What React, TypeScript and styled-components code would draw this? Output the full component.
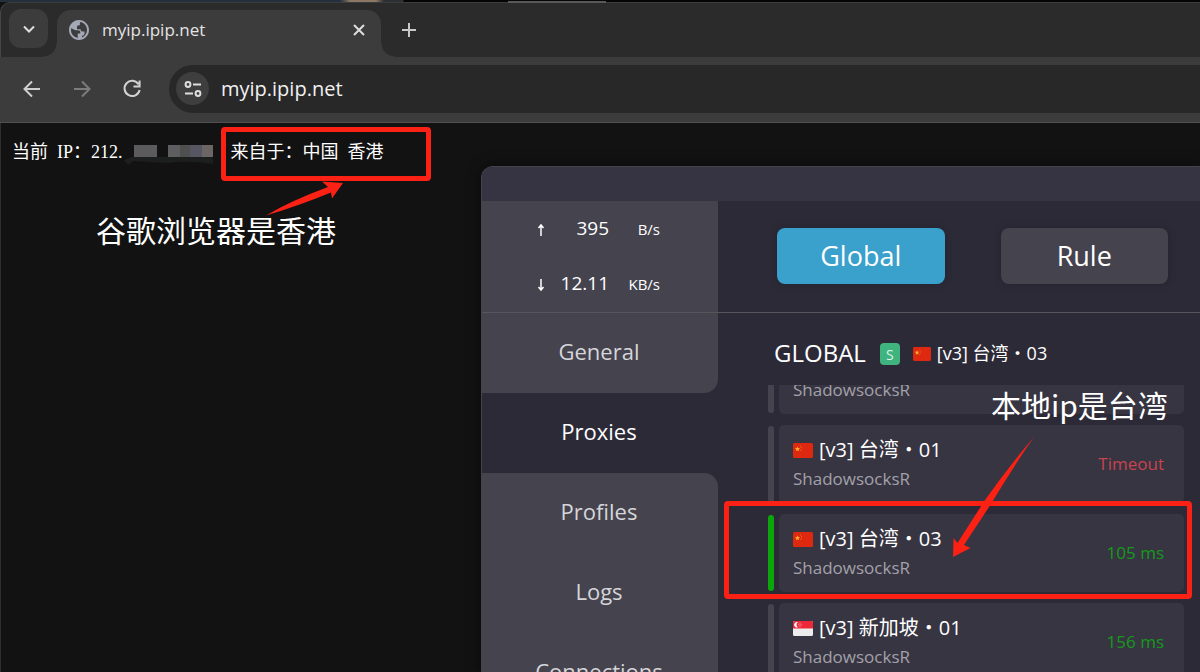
import React from "react";
import styled, { createGlobalStyle } from "styled-components";

const uiFont = `"Open Sans", "Noto Sans CJK SC", sans-serif`;

const GlobalStyle = createGlobalStyle`
  * { box-sizing: border-box; }
  html, body, #root { height: 100%; }
  body { margin: 0; background: #121212; overflow: hidden; font-family: ${uiFont}; }
  button, input { font-family: inherit; }
  h2, p { margin: 0; font-weight: 400; }
`;

const Screen = styled.div`
  position: relative;
  display: flex;
  flex-direction: column;
  height: 100%;
  overflow: hidden;
  background: #121212;
`;

/* ---------- browser ---------- */

const TopEdge = styled.div`
  display: flex;
  height: 2px;
  background: linear-gradient(90deg, #24313c 0 340px, #8b7764 350px 376px, #2c3034 384px 403px, #050505 404px);
`;

const EdgeHandle = styled.div`
  position: absolute;
  left: 471px;
  top: 1px;
  left: 508px;
  width: 98px;
  height: 2px;
  background: #58585b;
`;

const TabStrip = styled.div`
  display: flex;
  align-items: flex-end;
  height: 55px;
  padding-left: 8px;
  background: #2b2b2b;
  border-top: 1px solid #3a3c3e;
  border-left: 1px solid #44474a;
  border-top-left-radius: 10px;
`;

const IconButton = styled.button<{ $size: number; $bg?: string; $radius?: number }>`
  display: flex;
  align-items: center;
  justify-content: center;
  flex: none;
  width: ${(p) => p.$size}px;
  height: ${(p) => p.$size}px;
  padding: 0;
  border: 0;
  border-radius: ${(p) => p.$radius ?? 12}px;
  background: ${(p) => p.$bg ?? "transparent"};
  color: #e3e3e3;
`;

const TabSearch = styled.div`
  align-self: flex-start;
  padding-top: 6px;
`;

const Tab = styled.div`
  position: relative;
  display: flex;
  align-items: center;
  width: 324px;
  height: 47px;
  margin-left: 9px;
  padding: 0 10px 8px 12px;
  border-radius: 14px 14px 0 0;
  background: #3c3c3c;
  color: #e3e3e3;
  font-size: 17px;

  &::before, &::after {
    content: "";
    position: absolute;
    bottom: 0;
    width: 14px;
    height: 14px;
  }
  &::before {
    right: 100%;
    background: radial-gradient(circle at 0 0, transparent 13px, #3c3c3c 14px);
  }
  &::after {
    left: 100%;
    background: radial-gradient(circle at 100% 0, transparent 13px, #3c3c3c 14px);
  }
`;

const TabTitle = styled.span`
  flex: 1;
  margin-left: 13px;
`;

const NewTab = styled.div`
  margin: 0 0 13px 14px;
`;

const Toolbar = styled.div`
  display: flex;
  align-items: center;
  height: 66px;
  padding: 0 0 2px 16px;
  background: #3c3c3c;
  border-bottom: 1px solid #505052;
`;

const NavButtons = styled.div`
  display: flex;
  gap: 18px;
`;

const Omnibox = styled.label`
  display: flex;
  flex: 1;
  align-items: center;
  height: 48px;
  margin-left: 21px;
  padding-left: 7px;
  border-radius: 24px 0 0 24px;
  background: #282828;
`;

const Address = styled.input`
  flex: 1;
  min-width: 0;
  margin-left: 12px;
  padding: 0;
  border: 0;
  outline: 0;
  background: transparent;
  color: #f1f1f1;
  font-size: 20px;
  line-height: 28px;
`;

const Page = styled.main`
  flex: 1;
  border-left: 1px solid #2e2e2e;
  padding: 15px 11px;
`;

const IpLine = styled.p`
  display: flex;
  align-items: center;
  gap: 9px;
  color: #fff;
  font: 18px/28px "Liberation Serif", "Noto Sans CJK SC", serif;
`;

const Masked = styled.svg`
  width: 89px;
  height: 22px;
  margin: 3px 0 0 -8px;
`;

/* ---------- notes over the screen ---------- */

const Region = styled.span`
  position: relative;
  display: flex;
  gap: 9px;
  margin-left: 9px;
`;

const RedFrame = styled.span<{ $inset: string }>`
  position: absolute;
  inset: ${(p) => p.$inset};
  z-index: 2;
  border: 5px solid #fb2114;
  border-radius: 4px;
  pointer-events: none;
`;

const Note = styled.p<{ $left: number; $top: number }>`
  position: absolute;
  left: ${(p) => p.$left}px;
  top: ${(p) => p.$top}px;
  z-index: 3;
  color: #fff;
  font: 30px/40px "Noto Sans CJK SC", sans-serif;
  white-space: nowrap;
`;

const Arrows = styled.svg`
  position: absolute;
  left: 0;
  top: 0;
  z-index: 3;
  width: 1200px;
  height: 672px;
  pointer-events: none;
`;

/* ---------- proxy client window ---------- */

const ClientWindow = styled.section`
  position: absolute;
  left: 481px;
  right: 0;
  top: 166px;
  bottom: 0;
  display: flex;
  flex-direction: column;
  overflow: hidden;
  border: solid #45444c;
  border-width: 1px 0 0 1px;
  border-top-left-radius: 12px;
  background: #2d2a38;
  box-shadow: 0 0 14px #0008;
`;

const TitleBar = styled.div`
  flex: none;
  height: 34px;
  background: #363442;
`;

const ClientBody = styled.div`
  display: grid;
  grid-template-columns: 236px 1fr;
  grid-template-rows: 112px 1fr;
  flex: 1;
  min-height: 0;
`;

const Speeds = styled.div`
  display: flex;
  flex-direction: column;
  border-bottom: 1px solid #57565c;
  background: #44434e;
  color: #fff;
`;

const SpeedRow = styled.div`
  display: grid;
  grid-template-columns: 12px 61px 51px;
  align-items: center;
  height: 55px;
  padding: 0 0 2px 54px;
  font-size: 19px;
  text-align: right;
`;

const SpeedUnit = styled.span`
  padding-top: 2px;
  font-size: 15px;
`;

const SpeedArrow = styled.svg`
  width: 10px;
  height: 14px;
  margin-top: 4px;
`;

const Modes = styled.div`
  display: grid;
  grid-template-columns: 1fr 1fr;
  align-items: center;
  gap: 56px;
  padding: 0 32px 2px 59px;
  border-bottom: 1px solid #57565c;
`;

const ModeButton = styled.button<{ $active?: boolean }>`
  height: 56px;
  padding: 0;
  border: 0;
  border-radius: 8px;
  background: ${(p) => (p.$active ? "#3aa0cc" : "#44434e")};
  box-shadow: 0 0 8px #0003;
  color: #fff;
  font-size: 27px;
`;

const Menu = styled.nav`
  display: flex;
  flex-direction: column;
  min-height: 0;
  overflow: hidden;
`;

const MenuItem = styled.a<{ $active?: boolean; $corner?: "top" | "bottom" }>`
  flex: none;
  height: 80px;
  padding-right: 2px;
  border-radius: ${(p) => (p.$corner === "top" ? "0 14px 0 0" : p.$corner === "bottom" ? "0 0 14px 0" : "0")};
  background: ${(p) => (p.$active ? "transparent" : "#44434e")};
  color: ${(p) => (p.$active ? "#fff" : "#d6d5d9")};
  font-size: 22px;
  line-height: 76px;
  text-align: center;
  text-decoration: none;
`;

const Proxies = styled.div`
  display: flex;
  flex-direction: column;
  min-height: 0;
  padding: 0 16px 0 50px;
`;

const GroupHeader = styled.header`
  display: flex;
  flex: none;
  align-items: center;
  height: 72px;
  padding: 10px 0 0 6px;
  color: #fff;
`;

const GroupName = styled.h2`
  padding-bottom: 4px;
  font-size: 24px;
`;

const Badge = styled.span`
  display: flex;
  align-items: center;
  justify-content: center;
  width: 20px;
  height: 22px;
  margin: 0 13px 0 14px;
  border-radius: 4px;
  background: #40b47e;
  color: #d9f3e6;
  font-size: 14px;
`;

const Current = styled.span`
  margin-left: 6px;
  padding-bottom: 4px;
  font-size: 18px;
`;

const ProxyList = styled.ul`
  flex: 1;
  min-height: 0;
  margin: 0;
  padding: 0;
  overflow-x: visible;
  overflow-y: clip;
  list-style: none;
`;

const ProxyRow = styled.li<{ $scrolled?: boolean }>`
  position: relative;
  display: flex;
  gap: 5px;
  height: 78px;
  margin: ${(p) => (p.$scrolled ? "-49px" : "0")} 0 11px;
`;

const Marker = styled.span<{ $on?: boolean }>`
  width: 6px;
  margin: 1px 0;
  border-radius: 3px;
  background: ${(p) => (p.$on ? "#0aa60c" : "#44434e")};
`;

const Card = styled.div`
  display: flex;
  flex: 1;
  align-items: center;
  justify-content: space-between;
  padding: 0 20px 0 14px;
  border-radius: 5px;
  background: #373542;
`;

const ProxyName = styled.div`
  display: flex;
  align-items: center;
  gap: 6px;
  color: #fff;
  font-size: 20px;
  line-height: 30px;
`;

const ProxyType = styled.div`
  color: #a3a1a9;
  font-size: 17px;
  line-height: 28px;
`;

const Delay = styled.span<{ $ok?: boolean }>`
  padding-bottom: 2px;
  color: ${(p) => (p.$ok ? "#159a1b" : "#c7434f")};
  font-size: 17px;
`;

/* ---------- drawings ---------- */

function Flag({ country, w = 20 }: { country: "cn" | "sg"; w?: number }) {
  const h = w === 20 ? 15 : 14;
  return (
    <svg width={w} height={h} viewBox="0 0 20 15" preserveAspectRatio="none" role="img" aria-label={country}>
      <rect width="20" height="15" rx="1.5" fill={country === "cn" ? "#de2910" : "#ececec"} />
      {country === "cn" ? (
        <g fill="#ffb02e">
          <path d="M4.5 3.4l.7 1.7 1.8.1-1.4 1.2.5 1.8-1.6-1-1.5 1 .4-1.8L2 5.200l1.800-.1z" />
          <circle cx="7.600" cy="3" r=".4" />
          <circle cx="8.700" cy="4.500" r=".4" />
          <circle cx="8.600" cy="6.300" r=".4" />
          <circle cx="7.500" cy="7.700" r=".4" />
        </g>
      ) : (
        <g>
          <path d="M0 7.500V1.500A1.500 1.500 0 0 1 1.500 0h17A1.500 1.500 0 0 1 20 1.500v6z" fill="#ed2939" />
          <path d="M5 1.200a2.800 2.800 0 1 0 0 5.200 3 3 0 0 1 0-5.200z" fill="#fff" />
          <g fill="#f9b9be">
            <circle cx="7" cy="2" r=".5" />
            <circle cx="5.800" cy="3.300" r=".5" />
            <circle cx="8.200" cy="3.300" r=".5" />
            <circle cx="6.200" cy="5" r=".5" />
            <circle cx="7.800" cy="5" r=".5" />
          </g>
        </g>
      )}
    </svg>
  );
}

function Stroke({ d, size, color = "#dedede", width = 2 }: { d: string; size: number; color?: string; width?: number }) {
  return (
    <svg width={size} height={size} viewBox={`0 0 ${size} ${size}`} fill="none" stroke={color} strokeWidth={width}>
      <path d={d} />
    </svg>
  );
}

const Globe = () => (
  <svg width="20" height="20" viewBox="2 2 20 20" fill="#a4a9b5">
    <path d="M12 2C6.480 2 2 6.480 2 12s4.480 10 10 10 10-4.480 10-10S17.520 2 12 2zM4 12c0-.61.08-1.210.21-1.780L8.500 12.200H11c1.500 0 2.300.8 2.300 2.200v1.200h-2.600v3.200c0 .5.100.8.300 1.130C7.060 19.430 4 16.070 4 12zm11 7.400v-1.600c1.700-.2 2.500-1 2.500-2.500V13.500h-2.300c-.9 0-1.500-.5-1.500-1.400v-.8H10V9c0-1 .7-1.700 1.700-1.700h1.200V4.100C17 4.500 20 7.900 20 12c0 3.400-2.100 6.300-5 7.400z" />
  </svg>
);

const Tune = () => (
  <svg width="18" height="18" viewBox="0 0 18 18" fill="none" stroke="#dedede" strokeWidth="2">
    <circle cx="4" cy="4.500" r="2.400" />
    <path d="M9 4.500h8M1 13.500h8" />
    <circle cx="14" cy="13.500" r="2.400" />
  </svg>
);

const mask = [
  [10, 23, "#5b5b5d"],
  [44, 12, "#5e5e60"],
  [56, 10, "#504f50"],
  [66, 12, "#555662"],
  [78, 11, "#6b6663"],
] as const;

type Proxy = { name: string; country: "cn" | "sg"; delay: string; ok?: boolean; selected?: boolean };

const proxies: Proxy[] = [
  { name: "[v3] 台湾・01", country: "cn", delay: "Timeout" },
  { name: "[v3] 台湾・03", country: "cn", delay: "105 ms", ok: true, selected: true },
  { name: "[v3] 新加坡・01", country: "sg", delay: "156 ms", ok: true },
];

export default function App() {
  return (
    <Screen>
      <GlobalStyle />
      <TopEdge />
      <EdgeHandle />
      <TabStrip>
        <TabSearch>
          <IconButton $size={39} $bg="#3c3c3c" aria-label="Search tabs">
            <Stroke size={14} d="M2 4.500l5 5 5-5" />
          </IconButton>
        </TabSearch>
        <Tab>
          <Globe />
          <TabTitle>myip.ipip.net</TabTitle>
          <IconButton $size={24} aria-label="Close tab">
            <Stroke size={14} d="M2 2l10 10M12 2L2 12" />
          </IconButton>
        </Tab>
        <NewTab>
          <IconButton $size={28} aria-label="New tab">
            <Stroke size={16} d="M8 1v14M1 8h14" color="#c8c8c8" />
          </IconButton>
        </NewTab>
      </TabStrip>

      <Toolbar>
        <NavButtons>
          <IconButton $size={32} aria-label="Back">
            <Stroke size={20} d="M18 10H3M10 2.500L2.500 10l7.500 7.500" color="#cfcfcf" />
          </IconButton>
          <IconButton $size={32} aria-label="Forward" disabled>
            <Stroke size={20} d="M2 10h15M10 2.500L17.500 10 10 17.500" color="#7c7c7c" />
          </IconButton>
          <IconButton $size={32} aria-label="Reload">
            <Stroke size={20} d="M16.600 5.400A7.600 7.600 0 1 0 17.600 11M17.600 1.500v6H11.500" color="#d2d2d2" />
          </IconButton>
        </NavButtons>
        <Omnibox>
          <IconButton $size={33} $bg="#3e3e3f" $radius={17} aria-label="Site information">
            <Tune />
          </IconButton>
          <Address aria-label="Address" defaultValue="myip.ipip.net" />
        </Omnibox>
      </Toolbar>

      <Page>
        <IpLine>
          <span>当前</span>
          <span>IP：212.</span>
          <Masked viewBox="0 0 89 22" aria-hidden="true">
            <path d="M0 17l8-3h34q22-6 47 1v6q-24-4-46-1l-34-2-5 4z" fill="#1d1e1e" />
            {mask.map(([x, w, fill]) => (
              <rect key={x} x={x} y="2" width={w} height="12" fill={fill} />
            ))}
          </Masked>
          <Region>
            <span>来自于：中国</span>
            <span>香港</span>
            <RedFrame $inset="-11px -47px -15px -10px" />
          </Region>
        </IpLine>
      </Page>

      <ClientWindow>
        <TitleBar />
        <ClientBody>
          <Speeds>
            <SpeedRow>
              <SpeedArrow viewBox="0 0 10 14" fill="none" stroke="#fff" strokeWidth="1.500">
                <path d="M5 13V2M2.500 5L5 2l2.500 3" />
              </SpeedArrow>
              <span>395</span>
              <SpeedUnit>B/s</SpeedUnit>
            </SpeedRow>
            <SpeedRow>
              <SpeedArrow viewBox="0 0 10 14" fill="none" stroke="#fff" strokeWidth="1.500">
                <path d="M5 1v11M2.500 9L5 12l2.500-3" />
              </SpeedArrow>
              <span>12.11</span>
              <SpeedUnit>KB/s</SpeedUnit>
            </SpeedRow>
          </Speeds>
          <Modes>
            <ModeButton $active>Global</ModeButton>
            <ModeButton>Rule</ModeButton>
          </Modes>
          <Menu>
            <MenuItem href="#general" $corner="bottom">General</MenuItem>
            <MenuItem href="#proxies" $active>Proxies</MenuItem>
            <MenuItem href="#profiles" $corner="top">Profiles</MenuItem>
            <MenuItem href="#logs">Logs</MenuItem>
            <MenuItem href="#connections">Connections</MenuItem>
          </Menu>
          <Proxies>
            <GroupHeader>
              <GroupName>GLOBAL</GroupName>
              <Badge>S</Badge>
              <Flag country="cn" w={18} />
              <Current>[v3] 台湾・03</Current>
            </GroupHeader>
            <ProxyList>
              <ProxyRow $scrolled>
                <Marker />
                <Card>
                  <div>
                    <ProxyName>&nbsp;</ProxyName>
                    <ProxyType>ShadowsocksR</ProxyType>
                  </div>
                </Card>
              </ProxyRow>
              {proxies.map((p) => (
                <ProxyRow key={p.name}>
                  <Marker $on={p.selected} />
                  <Card>
                    <div>
                      <ProxyName>
                        <Flag country={p.country} />
                        {p.name}
                      </ProxyName>
                      <ProxyType>ShadowsocksR</ProxyType>
                    </div>
                    <Delay $ok={p.ok}>{p.delay}</Delay>
                  </Card>
                  {p.selected && <RedFrame $inset="-13px -8px -7px -44px" />}
                </ProxyRow>
              ))}
            </ProxyList>
          </Proxies>
        </ClientBody>
      </ClientWindow>

      <Note $left={96} $top={209}>谷歌浏览器是香港</Note>
      <Note $left={991} $top={384}>本地ip是台湾</Note>
      <Arrows viewBox="0 0 1200 672" fill="#fb2114" aria-hidden="true">
        <path d="M266 215.500Q290 201 328 187L322 181.500 343 183 332 198.500 331 192.500Q298 206 266 215.500z" />
        <path d="M1034 437Q1013 467 991 504L964 545 970.500 548 953 557 953.500 538 957.500 543 985 500Q1010 465 1034 437z" />
      </Arrows>
    </Screen>
  );
}
